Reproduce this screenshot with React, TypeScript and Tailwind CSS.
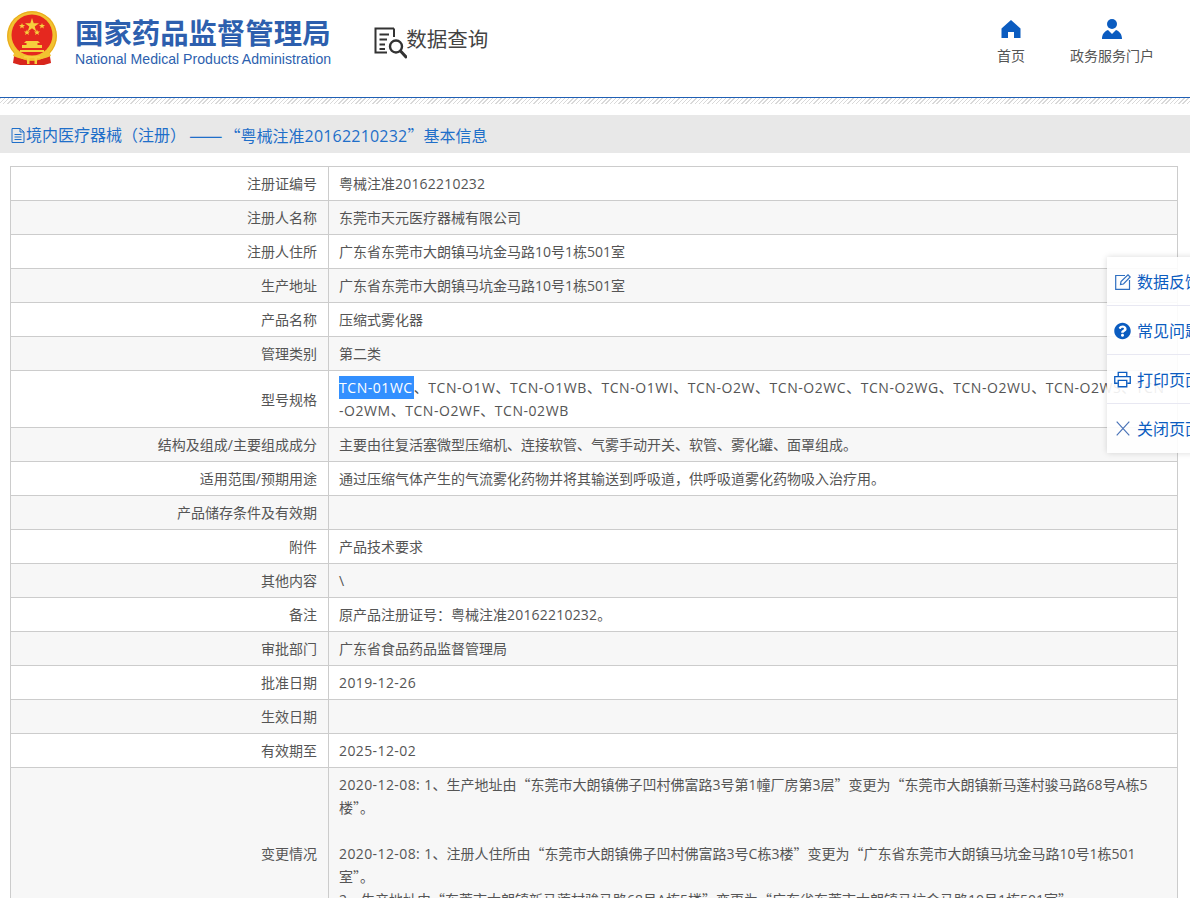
import React from 'react';
import { FaQuestionCircle } from 'react-icons/fa';

const FONT = '[font-family:"Open_Sans","Noto_Sans_CJK_SC",sans-serif]';

// quotes have to come from the CJK font, they are full width there
const Cjk = ({ text }: { text: string }) => (
  <>
    {text.split(/([“”]+)/).map((part, i) =>
      i % 2 === 1 ? (
        <span key={i} className="[font-family:'Noto_Sans_CJK_SC',sans-serif]">{part}</span>
      ) : (
        part
      ),
    )}
  </>
);

const Latin = ({ text }: { text: string }) => <span className="tracking-[0.4px]">{text}</span>;

const rows: { label: string; value: React.ReactNode }[] = [
  { label: '注册证编号', value: <>粤械注准<span className="tracking-[0.2px]">20162210232</span></> },
  { label: '注册人名称', value: '东莞市天元医疗器械有限公司' },
  { label: '注册人住所', value: '广东省东莞市大朗镇马坑金马路10号1栋501室' },
  { label: '生产地址', value: '广东省东莞市大朗镇马坑金马路10号1栋501室' },
  { label: '产品名称', value: '压缩式雾化器' },
  { label: '管理类别', value: '第二类' },
  {
    label: '型号规格',
    value: (
      <span className="tracking-[0.55px]">
        <span className="inline-block bg-[#3390ff] pr-[1px] text-white">TCN-01WC</span>
        、TCN-O1W、TCN-O1WB、TCN-O1WI、TCN-O2W、TCN-O2WC、TCN-O2WG、TCN-O2WU、TCN-O2WS、TCN
        <br />
        -O2WM、TCN-O2WF、TCN-02WB
      </span>
    ),
  },
  { label: '结构及组成/主要组成成分', value: '主要由往复活塞微型压缩机、连接软管、气雾手动开关、软管、雾化罐、面罩组成。' },
  { label: '适用范围/预期用途', value: '通过压缩气体产生的气流雾化药物并将其输送到呼吸道，供呼吸道雾化药物吸入治疗用。' },
  { label: '产品储存条件及有效期', value: '' },
  { label: '附件', value: '产品技术要求' },
  { label: '其他内容', value: '\\' },
  { label: '备注', value: <>原产品注册证号：粤械注准<span className="tracking-[0.2px]">20162210232</span>。</> },
  { label: '审批部门', value: '广东省食品药品监督管理局' },
  { label: '批准日期', value: <Latin text="2019-12-26" /> },
  { label: '生效日期', value: '' },
  { label: '有效期至', value: <Latin text="2025-12-02" /> },
  {
    label: '变更情况',
    value: (
      <>
        <Latin text="2020-12-08: 1" />
        <Cjk text="、生产地址由“东莞市大朗镇佛子凹村佛富路3号第1幢厂房第3层”变更为“东莞市大朗镇新马莲村骏马路68号A栋5楼”。" />
        <br />
        <br />
        <Latin text="2020-12-08: 1" />
        <Cjk text="、注册人住所由“东莞市大朗镇佛子凹村佛富路3号C栋3楼”变更为“广东省东莞市大朗镇马坑金马路10号1栋501室”。" />
        <br />
        <Cjk text="2、生产地址由“东莞市大朗镇新马莲村骏马路68号A栋5楼”变更为“广东省东莞市大朗镇马坑金马路10号1栋501室”。" />
        <br />
        <br />
      </>
    ),
  },
];

const Emblem = () => (
  <svg width="52" height="56" viewBox="0 0 52 56" className="shrink-0">
    <path d="M9 40 L7 53 L14 55 L38 55 L45 53 L43 40 Z" fill="#d8261c" />
    <circle cx="26" cy="26" r="25" fill="#f2c230" />
    <circle cx="26" cy="26" r="24.2" fill="none" stroke="#e8a91e" strokeWidth="1" />
    <circle cx="26" cy="25" r="20.5" fill="#e5281f" />
    <path d="M9 41 Q26 51 43 41 L45 46 Q26 54 7 46 Z" fill="#f2c230" />
    <polygon points="26,8 27.7,13.2 33,13.2 28.7,16.4 30.3,21.5 26,18.3 21.7,21.5 23.3,16.4 19,13.2 24.3,13.2" fill="#f6cf3d" />
    <polygon points="16,13 16.8,15 19,15 17.3,16.4 17.9,18.5 16,17.2 14.1,18.5 14.7,16.4 13,15 15.2,15" fill="#f6cf3d" />
    <polygon points="36,13 36.8,15 39,15 37.3,16.4 37.9,18.5 36,17.2 34.1,18.5 34.7,16.4 33,15 35.2,15" fill="#f6cf3d" />
    <polygon points="21,19.5 21.8,21.5 24,21.5 22.3,22.9 22.9,25 21,23.7 19.1,25 19.7,22.9 18,21.5 20.2,21.5" fill="#f6cf3d" />
    <polygon points="31,19.5 31.8,21.5 34,21.5 32.3,22.9 32.9,25 31,23.7 29.1,25 29.7,22.9 28,21.5 30.2,21.5" fill="#f6cf3d" />
    <path d="M20 31 L32 31 L34 33 L31.5 33 L31.5 35 L36 35 L36 38 L16 38 L16 35 L20.5 35 L20.5 33 L18 33 Z" fill="#f6cf3d" />
    <path d="M14 40 L38 40 L38 42 L14 42 Z" fill="#f6cf3d" />
    <path d="M18 46 L34 46 L34 48 L31 48 L31 54 L28.5 54 L28.5 48 L23.5 48 L23.5 54 L21 54 L21 48 L18 48 Z" fill="#f6cf3d" />
  </svg>
);

const QueryIcon = () => (
  <svg width="33" height="32" viewBox="0 0 33 32" fill="none" className="shrink-0">
    <path d="M20 1.5 L1.5 1.5 L1.5 25.5 L13 25.5" stroke="#333" strokeWidth="2" />
    <path d="M20 1.5 L20 10" stroke="#333" strokeWidth="2" />
    <path d="M5.5 7.5 H15 M5.5 12.5 H13 M5.5 17.5 H11 M5.5 22 H11" stroke="#333" strokeWidth="2" />
    <circle cx="22" cy="19.5" r="6" stroke="#333" strokeWidth="2.4" />
    <path d="M26.5 24 L32 30" stroke="#333" strokeWidth="3" strokeLinecap="round" />
  </svg>
);

const HomeIcon = () => (
  <svg width="20" height="18" viewBox="0 0 20 18">
    <path d="M10 0 L19.5 8.5 L19.5 18 L13 18 L13 12 L7 12 L7 18 L0.5 18 L0.5 8.5 Z" fill="#0b5cc0" />
  </svg>
);

const UserIcon = () => (
  <svg width="20" height="20" viewBox="0 0 20 20">
    <circle cx="10" cy="5" r="5" fill="#0b5cc0" />
    <path d="M0 20 C0 15 2.5 12.5 6 11 L10 15 L14 11 C17.5 12.5 20 15 20 20 Z" fill="#0b5cc0" />
  </svg>
);

const DocIcon = () => (
  <svg width="14" height="15" viewBox="0 0 14 15" fill="none" className="shrink-0">
    <path d="M1 .5 H9 L13 4 V14.5 H1 Z" stroke="#1f6fc9" />
    <path d="M9 .5 V4 H13 M3.5 6.5 H10.5 M3.5 9 H10.5 M3.5 11.5 H10.5" stroke="#1f6fc9" />
  </svg>
);

const EditIcon = () => (
  <svg width="16" height="16" viewBox="0 0 16 16" fill="none">
    <path d="M10 1.5 H.7 V15.3 H14.5 V6" stroke="#2f6fc0" strokeWidth="1.2" />
    <path d="M5.5 10.5 L6 7.5 L13 .8 L15.2 3 L8.5 10 Z" stroke="#2f6fc0" strokeWidth="1.2" />
  </svg>
);

const PrintIcon = () => (
  <svg width="18" height="17" viewBox="0 0 18 17" fill="none">
    <path d="M4.5 5.5 V.9 H13.5 V5.5" stroke="#0b5cc0" strokeWidth="1.4" />
    <path d="M4 12.5 H.8 V5.5 H17.2 V12.5 H14" stroke="#0b5cc0" strokeWidth="1.4" />
    <path d="M4.5 9.5 H13.5 V16.2 H4.5 Z" stroke="#0b5cc0" strokeWidth="1.4" />
  </svg>
);

const CloseIcon = () => (
  <svg width="14" height="15" viewBox="0 0 14 15" fill="none">
    <path d="M.7 .7 L13.3 14.3 M13.3 .7 L.7 14.3" stroke="#4b74b8" strokeWidth="1.2" />
  </svg>
);

const sideItems = [
  { icon: <EditIcon />, label: '数据反馈' },
  { icon: <FaQuestionCircle className="text-[18px] text-[#0b5cc0]" />, label: '常见问题' },
  { icon: <PrintIcon />, label: '打印页面' },
  { icon: <CloseIcon />, label: '关闭页面' },
];

export default function App() {
  return (
    <div className={`relative h-[898px] w-[1190px] overflow-hidden bg-white ${FONT}`}>
      <header className="flex h-[97px] items-start">
        <div className="ml-[6px] mt-[10px] flex">
          <Emblem />
        </div>
        <div className="ml-[17px] mt-[13px] flex flex-col">
          <div className="text-[28.4px] leading-[38px] font-bold whitespace-nowrap text-[#2d5fae] [font-family:'Noto_Sans_CJK_SC',sans-serif]">
            国家药品监督管理局
          </div>
          <div className="mt-[-1px] text-[14.1px] leading-[18px] whitespace-nowrap text-[#2d5fae] [font-family:'Liberation_Sans',sans-serif]">
            National Medical Products Administration
          </div>
        </div>
        <div className="mt-[27px] ml-[43px] flex items-start">
          <QueryIcon />
          <span className="-ml-px text-[20.5px] leading-[24px] whitespace-nowrap text-[#444]">数据查询</span>
        </div>
        <nav className="ml-auto mt-[19px] mr-[36px] flex gap-[45px]">
          <div className="flex flex-col items-center">
            <div className="flex h-[20px] items-center"><HomeIcon /></div>
            <span className="mt-[7px] text-[14px] leading-[20px] text-[#555]">首页</span>
          </div>
          <div className="flex flex-col items-center">
            <div className="flex h-[20px] items-center"><UserIcon /></div>
            <span className="mt-[7px] text-[14px] leading-[20px] text-[#555]">政务服务门户</span>
          </div>
        </nav>
      </header>

      <div className="h-[7px] border-t border-[#1f5fb4] bg-[repeating-linear-gradient(135deg,#d9d9d9_0,#d9d9d9_1px,#fff_1px,#fff_3px)]" />

      <div className="mt-[11px] flex h-[38px] items-center gap-[1px] bg-[#e8e8e8] pt-[2px] pl-[11px] text-[16px] whitespace-nowrap text-[#1f6fc9]">
        <DocIcon />
        <span>境内医疗器械（注册）</span>
        <span className="ml-[2px] flex items-center">
          <span className="text-[20px] leading-[20px] [font-family:'Noto_Sans_CJK_SC',sans-serif]">——</span>
          <span className="ml-[2px]">
            <Cjk text="“粤械注准" />
            <span className="tracking-[0.2px]">20162210232</span>
            <Cjk text="”基本信息" />
          </span>
        </span>
      </div>

      <table className="mt-[13px] ml-[10px] w-[1168px] table-fixed border-collapse text-[14px] leading-[23px] text-[#555]">
        <colgroup>
          <col className="w-[318px]" />
          <col />
        </colgroup>
        <tbody>
          {rows.map((row, i) => (
            <tr key={row.label} className={i % 2 === 1 ? 'bg-[#f7f7f7]' : 'bg-white'}>
              <td className="border border-[#ccc] py-[5px] pr-[11px] pl-[10px] text-right">{row.label}</td>
              <td className="border border-[#ccc] px-[10px] py-[5px] break-words">{row.value}</td>
            </tr>
          ))}
        </tbody>
      </table>

      <aside className="absolute top-[257px] left-[1107px] w-[130px] bg-white/90 shadow-[0_0_6px_rgba(0,0,0,0.15)]">
        {sideItems.map((item, i) => (
          <div
            key={item.label}
            className={`flex h-[49px] items-center gap-[6px] pl-[7px] text-[16px] whitespace-nowrap text-[#0b5cc0] ${i < 3 ? 'border-b border-[#e8e8f2] pt-[1px]' : ''}`}
          >
            <span className="flex w-[17px] justify-center">{item.icon}</span>
            <span>{item.label}</span>
          </div>
        ))}
      </aside>
    </div>
  );
}
